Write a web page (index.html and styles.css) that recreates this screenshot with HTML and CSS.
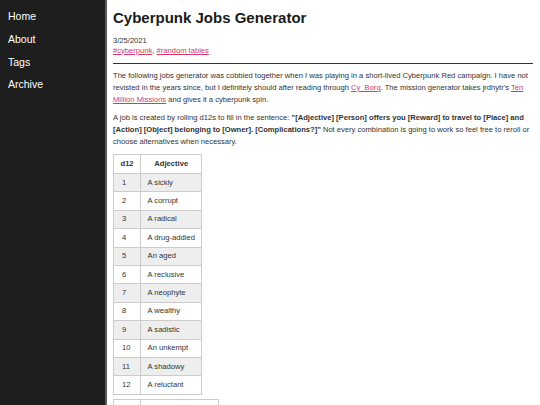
FILE: index.html
```html
<!DOCTYPE html>
<html>
<head>
  <link rel="stylesheet" href="styles.css">
</head>
<body>

  <nav class="sidebar">
    <a class="nav-link" href="#">Home</a>
    <a class="nav-link" href="#">About</a>
    <a class="nav-link" href="#">Tags</a>
    <a class="nav-link" href="#">Archive</a>
  </nav>

  <main class="post">
    <h1 class="post-title">Cyberpunk Jobs Generator</h1>
    <p class="post-date">3/25/2021</p>
    <p class="post-tags"><a href="#">#cyberpunk</a>, <a href="#">#random tables</a></p>
    <hr class="post-rule">

    <p>The following jobs generator was cobbled together when I was playing in a short-lived Cyberpunk Red campaign. I have not revisted in the years since, but I definitely should after reading through <a href="#">Cy_Borg</a>. The mission generator takes jrdhytr's <a href="#">Ten Million Missions</a> and gives it a cyberpunk spin.</p>

    <p>A job is created by rolling d12s to fill in the sentence: <b>"[Adjective] [Person] offers you [Reward] to travel to [Place] and [Action] [Object] belonging to [Owner]. [Complications?]"</b> Not every combination is going to work so feel free to reroll or choose alternatives when necessary.</p>

    <table class="roll-table">
      <tr><th>d12</th><th>Adjective</th></tr>
      <tr><td>1</td><td>A sickly</td></tr>
      <tr><td>2</td><td>A corrupt</td></tr>
      <tr><td>3</td><td>A radical</td></tr>
      <tr><td>4</td><td>A drug-addled</td></tr>
      <tr><td>5</td><td>An aged</td></tr>
      <tr><td>6</td><td>A reclusive</td></tr>
      <tr><td>7</td><td>A neophyte</td></tr>
      <tr><td>8</td><td>A wealthy</td></tr>
      <tr><td>9</td><td>A sadistic</td></tr>
      <tr><td>10</td><td>An unkempt</td></tr>
      <tr><td>11</td><td>A shadowy</td></tr>
      <tr><td>12</td><td>A reluctant</td></tr>
    </table>

    <table class="roll-table">
      <tr><th>d12</th><th>Person</th></tr>
      <tr><td>1</td><td>Corporate suit fixer</td></tr>
    </table>
  </main>

</body>
</html>
```

FILE: styles.css
```css
body {
  margin: 0;
  display: flex;
  height: 405px;
  overflow: hidden;
  font-family: "Liberation Sans", Arial, sans-serif;
  color: #333;
  background: #fff;
}

/* Left navigation column */
.sidebar {
  width: 105px;
  flex-shrink: 0;
  background: #1e1e1e;
  border-right: 2px solid #5a5a5a;
  padding-top: 9px;
  display: flex;
  flex-direction: column;
  gap: 8.8px;
}

.nav-link {
  color: #fff;
  text-decoration: none;
  font-size: 10.5px;
  line-height: 14px;
  padding-left: 8px;
}

.post {
  flex: 1;
  padding: 8px 7px 0 6px;
  font-size: 7.6px;
  line-height: 12px;
}

.post a {
  color: #d6386a;
}

.post-title {
  margin: 0 0 8px 0;
  font-size: 15px;
  line-height: 20px;
  color: #1a1a1a;
}

.post p {
  margin: 0 0 6px 0;
}

.post p.post-date, .post p.post-tags {
  margin: 0;
  line-height: 9.5px;
}

.post-rule {
  margin: 8px 0 6px 0;
  border: none;
  border-top: 1px solid #333;
}

.roll-table {
  border-collapse: collapse;
  margin-top: 4px;
  margin-bottom: 4px;
}

.roll-table th, .roll-table td {
  border: 1px solid #ccc;
  padding: 0 6.5px;
  height: 17.4px;
  text-align: left;
  white-space: nowrap;
}

.roll-table td:first-child {
  padding-left: 8px;
  padding-right: 5px;
}

.roll-table th {
  text-align: center;
  font-weight: bold;
  height: 18px;
}

.roll-table tr:nth-child(even) td {
  background: #eee;
}
```
